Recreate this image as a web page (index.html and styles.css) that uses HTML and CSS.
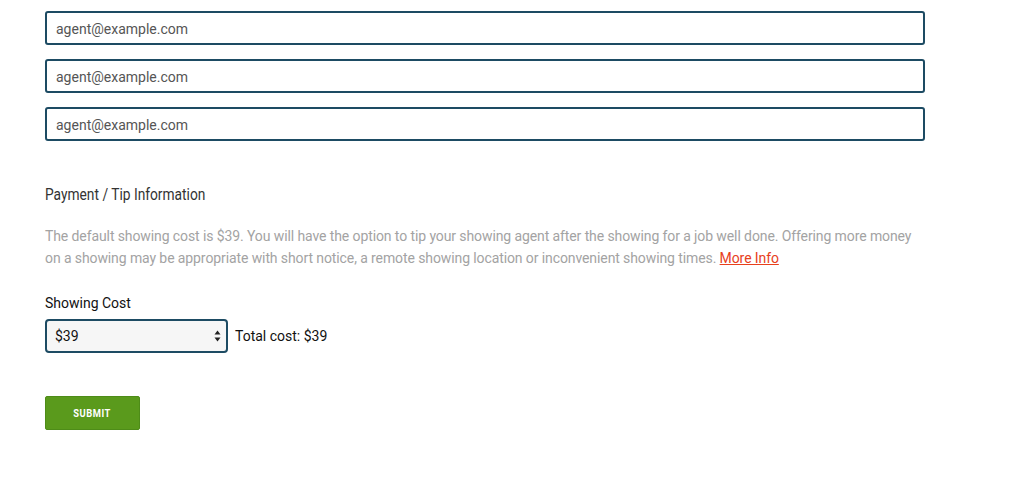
FILE: index.html
```html
<!DOCTYPE html>
<html lang="en">
<head>
    <meta charset="UTF-8">
    <title>Showing Request</title>
    <link rel="stylesheet" href="styles.css">
</head>
<body>
    <form class="request-form">
        <div class="email-list">
            <input class="email-input" type="email" value="agent@example.com">
            <input class="email-input" type="email" value="agent@example.com">
            <input class="email-input" type="email" value="agent@example.com">
        </div>

        <h3 class="section-title"><span class="title-text">Payment / Tip Information</span></h3>
        <p class="section-note">The default showing cost is $39. You will have the option to tip your showing agent after the showing for a job well done. Offering more money on a showing may be appropriate with short notice, a remote showing location or inconvenient showing times. <a href="#" class="more-link">More Info</a></p>

        <label class="field-label" for="cost">Showing Cost</label>
        <div class="cost-row">
            <div class="select-wrap">
                <select id="cost" class="cost-select">
                    <option>$39</option>
                    <option>$49</option>
                    <option>$59</option>
                </select>
                <svg class="select-arrows" width="7" height="12" viewBox="0 0 7 12">
                    <path d="M3.5 0.5 L6.5 4.5 L0.5 4.5 Z" fill="#222"/>
                    <path d="M3.5 11.5 L6.5 7.5 L0.5 7.5 Z" fill="#222"/>
                </svg>
            </div>
            <span class="total-cost">Total cost: $39</span>
        </div>

        <button type="submit" class="submit-btn"><span class="btn-text">SUBMIT</span></button>
    </form>
</body>
</html>
```

FILE: styles.css
```css
body {
    margin: 0;
    background: #fff;
    font-family: Roboto, "Liberation Sans", sans-serif;
}

.request-form {
    width: 880px;
    padding: 11px 0 0 45px;
}

/* email fields */
.email-list {
    display: flex;
    flex-direction: column;
    gap: 14px;
}

.email-input {
    box-sizing: border-box;
    width: 880px;
    height: 34px;
    border: 2px solid #1d4b63;
    border-radius: 3px;
    padding: 1px 9px 0;
    font-family: Roboto, sans-serif;
    font-size: 14px;
    color: #555;
    outline: none;
}

/* payment section */
.section-title {
    margin: 44px 0 0;
    font-weight: normal;
    font-size: 16px;
    line-height: 20px;
    color: #333;
}

/* condensed look of the heading font */
.title-text {
    display: inline-block;
    transform: scaleX(0.86);
    transform-origin: left center;
}

.section-note {
    margin: 20px 0 0;
    font-size: 14px;
    line-height: 22px;
    letter-spacing: -0.1px;
    color: #a3a3a3;
}

.more-link {
    color: #e8401c;
    text-decoration: underline;
}

.field-label {
    display: block;
    margin-top: 25px;
    font-size: 14px;
    line-height: 18px;
    color: #111;
}

.cost-row {
    display: flex;
    align-items: center;
    gap: 7px;
    margin-top: 7px;
}

.select-wrap {
    position: relative;
    width: 183px;
    height: 34px;
}

.cost-select {
    appearance: none;
    -webkit-appearance: none;
    box-sizing: border-box;
    width: 100%;
    height: 100%;
    border: 2px solid #1d4b63;
    border-radius: 4px;
    background: #f6f6f6;
    padding: 0 8px;
    font-family: Roboto, sans-serif;
    font-size: 14px;
    color: #111;
    outline: none;
}

.select-arrows {
    position: absolute;
    right: 7px;
    top: 11px;
    pointer-events: none;
}

.total-cost {
    font-size: 14px;
    color: #111;
}

.submit-btn {
    display: block;
    margin-top: 43px;
    width: 95px;
    height: 34px;
    padding: 0;
    border: 1px solid #4e8c18;
    border-radius: 2px;
    background: #5a9a1c;
    color: #fff;
    font-family: Roboto, sans-serif;
    font-weight: bold;
    font-size: 11px;
    letter-spacing: 0.6px;
    cursor: pointer;
}

.btn-text {
    display: inline-block;
    transform: scaleX(0.85);
}
```
